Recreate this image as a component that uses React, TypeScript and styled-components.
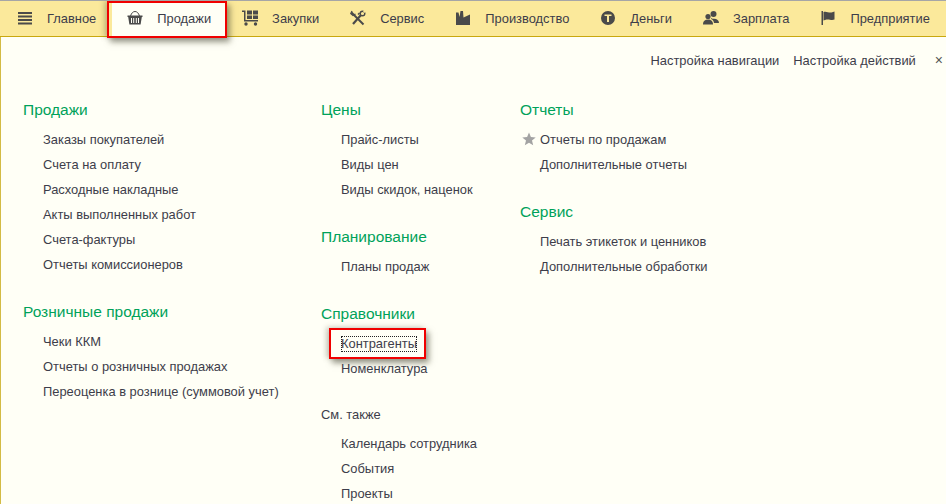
import React from 'react';
import styled, { createGlobalStyle } from 'styled-components';

const GlobalStyle = createGlobalStyle`
  html, body {
    margin: 0;
    padding: 0;
    height: 100%;
    overflow: hidden;
    background: #fffff6;
  }
  body {
    font-family: "Liberation Sans", Arial, sans-serif;
    font-size: 12.9px;
    color: #3d3d4a;
  }
`;

const Page = styled.div`
  width: 946px;
  height: 504px;
  overflow: hidden;
  display: flex;
  flex-direction: column;
  box-sizing: border-box;
  border-top: 1px solid #a6a6a6;
  background: #fffff6;
`;

const NavBar = styled.nav`
  height: 36px;
  flex: none;
  box-sizing: border-box;
  display: flex;
  padding-left: 2px;
  background: #fbe99b;
  border-bottom: 1px solid #c9a80f;
`;

const NavItem = styled.div<{ $active?: boolean }>`
  position: relative;
  display: flex;
  align-items: center;
  gap: 14px;
  padding: 0 15px 1px 15px;
  margin-right: 1px;
  background: ${(p) => (p.$active ? '#fffff6' : 'transparent')};
  white-space: nowrap;
  color: #3d3d4a;
  svg {
    flex: none;
    display: block;
  }
`;

const Callout = styled.span<{ $inset: string }>`
  position: absolute;
  inset: ${(p) => p.$inset};
  border: 2px solid #f00000;
  box-shadow: 3px 4px 6px rgba(70, 70, 50, 0.55), -3px -1px 5px rgba(70, 70, 50, 0.25);
  pointer-events: none;
`;

const Body = styled.main`
  flex: 1;
  min-height: 0;
  border-left: 1px solid #d3bb45;
  padding-left: 22px;
`;

const ActionBar = styled.div`
  display: flex;
  justify-content: flex-end;
  align-items: center;
  height: 47px;
  padding-bottom: 1px;
  box-sizing: border-box;
  padding-right: 3px;
`;

const ActionLink = styled.span`
  margin-right: 14px;
`;

const CloseButton = styled.span`
  margin-left: 5px;
  font-size: 14px;
  line-height: 14px;
  color: #555;
`;

const Columns = styled.div`
  display: grid;
  grid-template-columns: 298px 199px 1fr;
  padding-top: 13px;
`;

const Column = styled.div`
  display: flex;
  flex-direction: column;
  gap: 22px;
`;

const Group = styled.section`
  display: flex;
  flex-direction: column;
`;

const GroupTitle = styled.h3`
  margin: 0 0 7px;
  height: 23px;
  line-height: 25px;
  font-size: 15.5px;
  font-weight: normal;
  color: #00a25a;
`;

const PlainTitle = styled.div`
  height: 22px;
  line-height: 22px;
  margin-top: 1px;
  margin-bottom: 5px;
`;

const LinkRow = styled.div`
  position: relative;
  height: 25px;
  line-height: 25px;
  padding-left: 20px;
  white-space: nowrap;
`;

const FocusedText = styled.span`
  position: relative;
  display: inline-block;
  line-height: 16px;
  outline: 1px dotted #222;
  outline-offset: -1px;
`;

const StarMark = styled.svg`
  position: absolute;
  left: 2px;
  top: 5px;
`;

const ico = { width: 16, height: 16, viewBox: '0 0 16 16', fill: '#4a4a4a' };

const MenuIcon = () => (
  <svg {...ico}>
    <path d="M1 2h14v2H1zM1 5.500h14v2H1zM1 9h14v2H1zM1 12.500h14v2H1z" />
  </svg>
);

const BasketIcon = () => (
  <svg {...ico}>
    <path d="M3.500 6C4.500 3 6 1.500 8 1.500S11.500 3 12.500 6" fill="none" stroke="#4a4a4a" strokeWidth="1" />
    <path d="M.5 5.500h15V7h-.7l-1.200 7.500H2.400L1.200 7H.5zM4 8v5h1V8zm2.200 0v5h1V8zm2.600 0v5h1V8zM11 8v5h1V8z" fillRule="evenodd" />
  </svg>
);

const CartIcon = () => (
  <svg {...ico}>
    <path d="M0 .5h3.500v9.500H16v1.500H2V2H0z" />
    <path d="M5 .5h5v4H5zM11 .5h5v4h-5zM5 5.500h5V9H5zM11 5.500h5V9h-5z" />
    <circle cx="4" cy="14" r="1.700" />
    <circle cx="13.500" cy="14" r="1.700" />
  </svg>
);

const ToolsIcon = () => (
  <svg {...ico}>
    <path d="M1.500 2.500 13.500 14.500" stroke="#4a4a4a" strokeWidth="2" fill="none" />
    <path d="M2 1 .8 3.500 3 5.500l2.500-1.500" fill="none" stroke="#4a4a4a" strokeWidth="1.300" />
    <path d="M3 14 11 5" stroke="#4a4a4a" strokeWidth="2.200" fill="none" />
    <circle cx="12.500" cy="3.500" r="2.300" fill="none" stroke="#4a4a4a" strokeWidth="1.400" />
    <circle cx="14.500" cy="1.500" r="1.200" fill="#fbe99b" />
    <path d="M7.500 4 9 2.500l1 1L8.500 5z" />
  </svg>
);

const FactoryIcon = () => (
  <svg {...ico}>
    <path d="M1 15V2.500h2.500L4.500 7 5.500 1H8l.5 6.500L15 4.500V15z" />
  </svg>
);

const CoinIcon = () => (
  <svg {...ico}>
    <path d="M8 1a7 7 0 1 0 0 14A7 7 0 0 0 8 1zM4.500 4.500h7V6H9v6H7V6H4.500z" fillRule="evenodd" />
  </svg>
);

const PeopleIcon = () => (
  <svg {...ico}>
    <circle cx="10.500" cy="4" r="3" />
    <circle cx="5" cy="6.500" r="2.600" />
    <path d="M0 14c0-3 2-4.500 5-4.500S10 11 10 14.500H0z" />
    <path d="M8 8c1 .8 2 .8 3 .8 3 0 5 1.700 5 4.200h-5c-.3-2-1.300-3.400-3-4z" />
  </svg>
);

const FlagIcon = () => (
  <svg {...ico}>
    <path d="M1.500 1h1.500v14H1.500z" />
    <path d="M3.500 2c3-1 5 1 8 .5L14.500 1.500v8c-3 1.300-5-.5-8 0l-3 1z" />
  </svg>
);

function Star() {
  return (
    <StarMark width="14" height="14" viewBox="0 0 14 14" fill="#a3a3a3">
      <path d="M7 .5l1.900 4.500 4.800.4-3.700 3.100 1.200 4.800L7 10.700l-4.200 2.600L4 8.500.3 5.400 5.100 5z" />
    </StarMark>
  );
}

const navItems = [
  { label: 'Закупки', icon: <CartIcon /> },
  { label: 'Сервис', icon: <ToolsIcon /> },
  { label: 'Производство', icon: <FactoryIcon /> },
  { label: 'Деньги', icon: <CoinIcon /> },
  { label: 'Зарплата', icon: <PeopleIcon /> },
  { label: 'Предприятие', icon: <FlagIcon /> },
];

function LinkList({ items }: { items: string[] }) {
  return (
    <>
      {items.map((item) => (
        <LinkRow key={item}>{item}</LinkRow>
      ))}
    </>
  );
}

export default function App() {
  return (
    <Page>
      <GlobalStyle />
      <NavBar>
        <NavItem>
          <MenuIcon />
          Главное
        </NavItem>
        <NavItem $active>
          <BasketIcon />
          Продажи
          <Callout $inset="0 -1px -2px -5px" />
        </NavItem>
        {navItems.map((item) => (
          <NavItem key={item.label}>
            {item.icon}
            {item.label}
          </NavItem>
        ))}
      </NavBar>
      <Body>
        <ActionBar>
          <ActionLink>Настройка навигации</ActionLink>
          <ActionLink>Настройка действий</ActionLink>
          <CloseButton>×</CloseButton>
        </ActionBar>
        <Columns>
          <Column>
            <Group>
              <GroupTitle>Продажи</GroupTitle>
              <LinkList
                items={[
                  'Заказы покупателей',
                  'Счета на оплату',
                  'Расходные накладные',
                  'Акты выполненных работ',
                  'Счета-фактуры',
                  'Отчеты комиссионеров',
                ]}
              />
            </Group>
            <Group>
              <GroupTitle>Розничные продажи</GroupTitle>
              <LinkList
                items={['Чеки ККМ', 'Отчеты о розничных продажах', 'Переоценка в рознице (суммовой учет)']}
              />
            </Group>
          </Column>
          <Column>
            <Group>
              <GroupTitle>Цены</GroupTitle>
              <LinkList items={['Прайс-листы', 'Виды цен', 'Виды скидок, наценок']} />
            </Group>
            <Group>
              <GroupTitle>Планирование</GroupTitle>
              <LinkList items={['Планы продаж']} />
            </Group>
            <Group>
              <GroupTitle>Справочники</GroupTitle>
              <LinkRow>
                <FocusedText>
                  Контрагенты
                  <Callout $inset="-8px -9px -7px -12px" />
                </FocusedText>
              </LinkRow>
              <LinkRow>Номенклатура</LinkRow>
            </Group>
            <Group>
              <PlainTitle>См. также</PlainTitle>
              <LinkList items={['Календарь сотрудника', 'События', 'Проекты']} />
            </Group>
          </Column>
          <Column>
            <Group>
              <GroupTitle>Отчеты</GroupTitle>
              <LinkRow>
                <Star />
                Отчеты по продажам
              </LinkRow>
              <LinkRow>Дополнительные отчеты</LinkRow>
            </Group>
            <Group>
              <GroupTitle>Сервис</GroupTitle>
              <LinkList items={['Печать этикеток и ценников', 'Дополнительные обработки']} />
            </Group>
          </Column>
        </Columns>
      </Body>
    </Page>
  );
}
